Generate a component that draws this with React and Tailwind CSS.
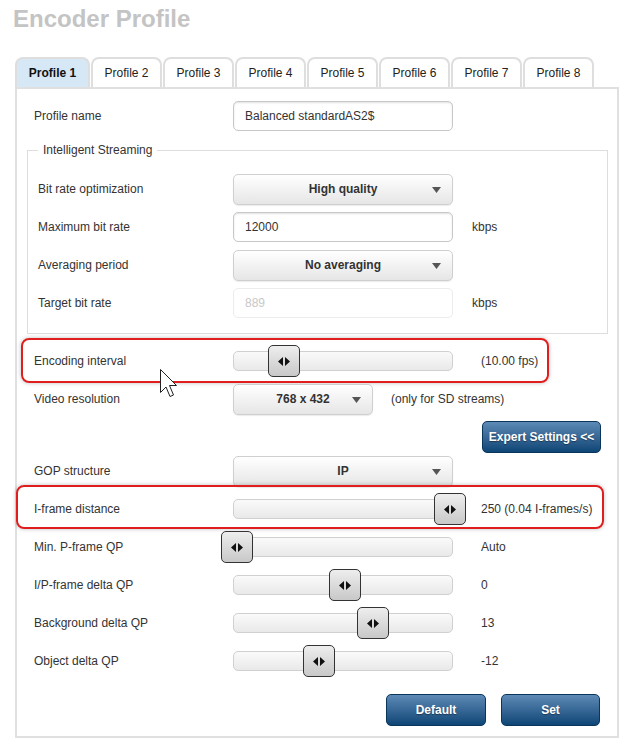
import React from 'react'

const tabs = ['Profile 1', 'Profile 2', 'Profile 3', 'Profile 4', 'Profile 5', 'Profile 6', 'Profile 7', 'Profile 8']

const sliders = [
  { label: 'Min. P-frame QP', pos: -13, value: 'Auto' },
  { label: 'I/P-frame delta QP', pos: 95, value: '0' },
  { label: 'Background delta QP', pos: 123, value: '13' },
  { label: 'Object delta QP', pos: 69, value: '-12' },
]

function Arrow() {
  return (
    <svg width="9" height="6" viewBox="0 0 9 6">
      <path d="M0 0H9L4.5 6Z" fill="#555" />
    </svg>
  )
}

function Select({ value, wide = true }) {
  return (
    <div className={`relative flex items-center justify-center h-[31px] rounded-[5px] border border-[#cfcfcf] bg-gradient-to-b from-white to-[#e6e6e6] shadow-[0_1px_1px_rgba(0,0,0,0.08)] font-bold text-[#333] ${wide ? 'w-[220px]' : 'w-[140px]'}`}>
      <span>{value}</span>
      <span className="absolute right-[11px] top-[12px] flex"><Arrow /></span>
    </div>
  )
}

function Input({ value, disabled }) {
  return (
    <div className={`flex items-center w-[220px] h-[30px] rounded-[5px] border pl-[11px] bg-white ${disabled ? 'border-[#ececec] text-[#c8c8c8]' : 'border-[#c8c8c8] text-[#333] shadow-[inset_0_1px_2px_rgba(0,0,0,0.12)]'}`}>
      {value}
    </div>
  )
}

function Slider({ pos }) {
  return (
    <div className="relative w-[220px] h-[20px] rounded-[5px] border border-[#d0d0d0] bg-gradient-to-b from-[#fafafa] to-[#e9e9e9]">
      <div
        className="absolute top-1/2 -translate-y-1/2 w-[32px] h-[32px] rounded-[5px] border border-[#333] bg-gradient-to-b from-[#eeeeee] to-[#c8c8c8] flex items-center justify-center"
        style={{ left: pos }}
      >
        <svg width="12" height="9" viewBox="0 0 12 9">
          <path d="M5 0V9L0 4.5Z M7 0V9L12 4.5Z" fill="#111" />
        </svg>
      </div>
    </div>
  )
}

function Row({ label, children, inner, className = '' }) {
  return (
    <div className={`relative flex items-center h-[38px] ${className}`}>
      <div className={`${inner ? 'w-[195px]' : 'w-[199px]'} shrink-0 text-[#333]`}>{label}</div>
      {children}
    </div>
  )
}

function BlueButton({ children, className = '' }) {
  return (
    <button className={`h-[32px] rounded-[5px] border border-[#0b365c] bg-gradient-to-b from-[#5d8ab6] to-[#0c4676] text-white font-bold [text-shadow:0_1px_1px_rgba(0,0,0,0.4)] ${className}`}>
      {children}
    </button>
  )
}

function Highlight({ className }) {
  return <div className={`absolute pointer-events-none rounded-[8px] border-2 border-[#e01e1e] shadow-[0_0_4px_rgba(0,0,0,0.25)] ${className}`} />
}

export default function App() {
  return (
    <div className="relative w-[636px] h-[746px] bg-white text-[12px] font-['Liberation_Sans',Arial,sans-serif] overflow-hidden">
      <h1 className="pl-[13px] pt-[5px] h-[33px] text-[24px] leading-[28px] font-bold text-[#c4c4c4]">Encoder Profile</h1>

      <div className="mt-[24px] ml-[15px] flex gap-[1px]">
        {tabs.map((t, i) => (
          <div
            key={t}
            className={`h-[30px] flex items-center justify-center rounded-t-[8px] border-2 border-b-0 border-[#dedede] ${i === 0 ? 'w-[75px] bg-[#d6e7f5] font-bold text-[#111]' : 'w-[71px] bg-white text-[#222]'}`}
          >
            {t}
          </div>
        ))}
      </div>

      <div className="ml-[15px] w-[604px] border-2 border-[#e0e0e0] pl-[17px] pt-[8px] pb-[10px]">
        <Row label="Profile name">
          <Input value="Balanced standardAS2$" />
        </Row>

        <fieldset className="mt-[8px] -ml-[7px] w-[581px] border border-[#dddddd] pl-[10px] pb-[11px]">
          <legend className="px-[5px] text-[#333] leading-[15px]">Intelligent Streaming</legend>
          <div className="mt-[12px]">
            <Row inner label="Bit rate optimization">
              <Select value="High quality" />
            </Row>
            <Row inner label="Maximum bit rate">
              <Input value="12000" />
              <span className="ml-[19px] text-[#333]">kbps</span>
            </Row>
            <Row inner label="Averaging period">
              <Select value="No averaging" />
            </Row>
            <Row inner label="Target bit rate">
              <Input value="889" disabled />
              <span className="ml-[19px] text-[#333]">kbps</span>
            </Row>
          </div>
        </fieldset>

        <Row label="Encoding interval" className="mt-[8px]">
          <Highlight className="-left-[13px] -top-[4px] w-[528px] h-[45px]" />
          <Slider pos={34} />
          <span className="ml-[28px] text-[#333]">(10.00 fps)</span>
        </Row>

        <Row label="Video resolution">
          <Select value="768 x 432" wide={false} />
          <span className="ml-[18px] text-[#333]">(only for SD streams)</span>
        </Row>

        <div className="h-[34px] flex items-start justify-end pr-[16px] pt-[3px]">
          <BlueButton className="w-[119px]">Expert Settings &lt;&lt;</BlueButton>
        </div>

        <Row label="GOP structure" className="h-[36px]">
          <Select value="IP" />
        </Row>

        <Row label="I-frame distance">
          <Highlight className="-left-[18px] -top-[5px] w-[588px] h-[44px]" />
          <Slider pos={200} />
          <span className="ml-[28px] text-[#333]">250 (0.04 I-frames/s)</span>
        </Row>

        {sliders.map(s => (
          <Row key={s.label} label={s.label}>
            <Slider pos={s.pos} />
            <span className="ml-[28px] text-[#333]">{s.value}</span>
          </Row>
        ))}

        <div className="mt-[14px] flex justify-end gap-[15px] pr-[17px]">
          <BlueButton className="w-[100px]">Default</BlueButton>
          <BlueButton className="w-[99px]">Set</BlueButton>
        </div>
      </div>

      {/* mouse pointer */}
      <svg className="absolute left-[160px] top-[369px]" width="18" height="29" viewBox="0 0 18 29">
        <path d="M0.5 0.5V23.5L6 18L10 27.5L13.5 26L9.5 16.5H16.5Z" fill="white" stroke="#222" strokeWidth="1" strokeLinejoin="round" />
      </svg>
    </div>
  )
}
